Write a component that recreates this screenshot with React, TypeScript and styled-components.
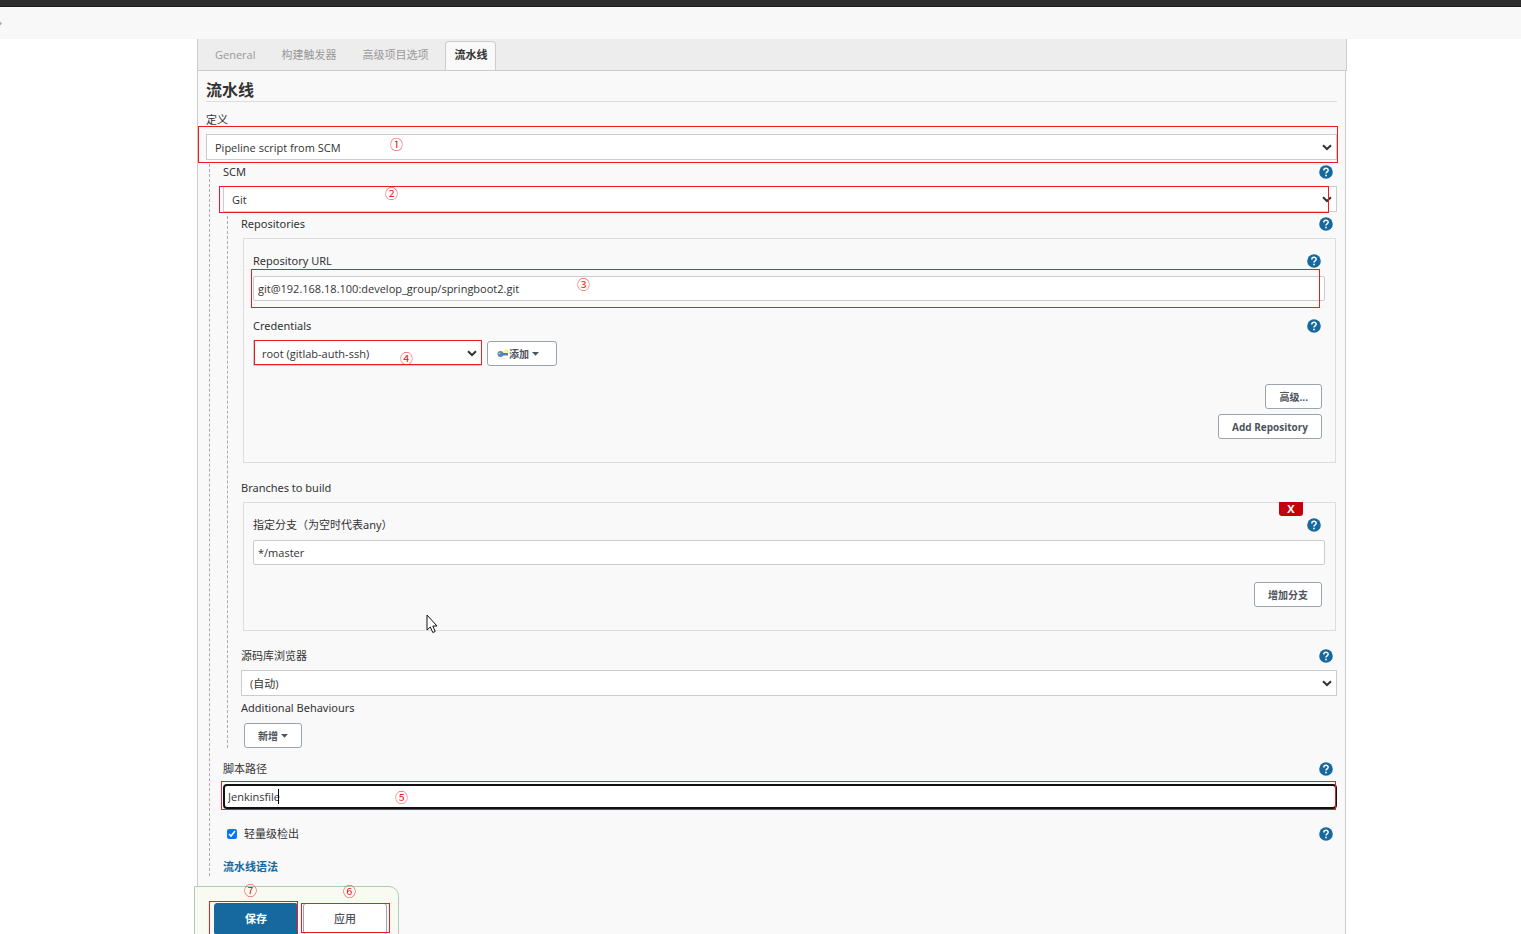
import React from 'react';
import styled, { createGlobalStyle, css } from 'styled-components';

const red = '#ed1c24';
const blue = '#15699e';

const GlobalStyle = createGlobalStyle`
  * { box-sizing: border-box; }
  body {
    margin: 0;
    background: #fff;
    color: #333;
    font: 11px/16px "Noto Sans", "Noto Sans CJK SC", sans-serif;
  }
  button, input, select {
    margin: 0;
    color: inherit;
    font: 11px/16px "Open Sans", "Noto Sans CJK SC", sans-serif;
  }
`;

const Page = styled.div`
  min-height: 100vh;
  display: flex;
  flex-direction: column;
`;

const TopBar = styled.header`
  height: 7px;
  background: #2d2d2d;
  border-bottom: 1px solid #1c1c1c;
`;

const Breadcrumbs = styled.nav`
  height: 32px;
  background: #f8f8f8;
  display: flex;
  align-items: center;
`;

const Main = styled.main`
  flex: 1;
  display: flex;
  flex-direction: column;
  margin: 0 174px 0 197px;
`;

const Tabs = styled.div`
  display: flex;
  align-items: flex-end;
  gap: 8px;
  height: 32px;
  padding-left: 8px;
  background: #ededed;
  border: 1px solid #ccc;
  border-top: 0;
`;

const Tab = styled.button<{ $active?: boolean }>`
  height: 29px;
  padding: 0 8px 2px;
  border: 1px solid transparent;
  border-bottom: 0;
  border-radius: 4px 4px 0 0;
  background: none;
  color: #999;
  ${(p) =>
    p.$active &&
    css`
      background: #f9f9f9;
      border-color: #ccc;
      color: #333;
      font-weight: 700;
    `}
`;

const Panel = styled.form`
  flex: 1;
  margin-right: 1px;
  padding: 7px 8px 54px;
  background: #f9f9f9;
  border: solid #ccc;
  border-width: 0 1px;
`;

const Title = styled.h1`
  margin: 0 0 6px;
  height: 24px;
  border-bottom: 1px solid #ddd;
  font-size: 16px;
  line-height: 24px;
`;

const LabelRow = styled.div<{ $raised?: boolean }>`
  display: flex;
  align-items: center;
  justify-content: space-between;
  height: 26px;
  padding: 0 4px ${(p) => (p.$raised ? 2 : 0)}px 0;
`;

const Group = styled.div<{ $nested?: boolean }>`
  display: flow-root;
  margin: 4px 0 0 ${(p) => (p.$nested ? 4 : 3)}px;
  padding-left: 13px;
  border-left: 1px dashed #aaa;

  > :first-child {
    margin-top: -4px;
  }
`;

const Box = styled.section`
  position: relative;
  margin: 0 1px 0 2px;
  padding: 9px 10px 23px 9px;
  border: 1px solid #ddd;
`;

const Field = styled.div<{ $width?: number }>`
  position: relative;
  height: 26px;
  width: ${(p) => (p.$width ? `${p.$width}px` : 'auto')};
`;

const Select = styled.select`
  appearance: none;
  display: block;
  width: 100%;
  height: 26px;
  padding: 2px 24px 0 8px;
  border: 1px solid #ccc;
  border-radius: 0;
  background: #fff;
`;

const Chevron = styled.svg`
  position: absolute;
  right: 5px;
  top: 10px;
  pointer-events: none;
`;

const Input = styled.input<{ $focused?: boolean }>`
  display: block;
  width: 100%;
  height: 25px;
  padding: 0 4px;
  border: 1px solid #ccc;
  border-radius: 2px;
  background: #fff;
  ${(p) =>
    p.$focused &&
    css`
      border: 2px solid #101010;
      border-radius: 4px;
      padding: 0 3px;
    `}
`;

const Caret = styled.span`
  position: absolute;
  left: 55px;
  top: 5px;
  width: 1px;
  height: 15px;
  background: #000;
`;

const Outline = styled.span<{ $inset: string }>`
  position: absolute;
  inset: ${(p) => p.$inset};
  border: 1px solid ${red};
  pointer-events: none;
`;

const Digit = styled.span<{ $x: number; $y: number }>`
  position: absolute;
  left: ${(p) => p.$x}px;
  top: ${(p) => p.$y}px;
  color: ${red};
  font: 13px/16px "Noto Sans CJK SC", sans-serif;
  pointer-events: none;
`;

const Button = styled.button`
  height: 25px;
  padding: 0 13px;
  border: 1px solid #98a5b0;
  border-radius: 3px;
  background: #fff;
  color: #4d545d;
  font-size: 10px;
  font-weight: 700;
  display: inline-flex;
  align-items: center;
  justify-content: center;
  white-space: nowrap;
`;

const AddButton = styled(Button)`
  width: 70px;
  padding: 0 17px 0 9px;
`;

const Row = styled.div`
  display: flex;
  align-items: flex-end;
  gap: 5px;
`;

const ButtonRow = styled(Row)`
  height: 26px;
  padding-left: 3px;
`;

const Actions = styled.div<{ $top: number }>`
  display: flex;
  flex-direction: column;
  align-items: flex-end;
  gap: 5px;
  margin-top: ${(p) => p.$top}px;
  padding-right: 3px;
`;

const HelpButton = styled.button`
  width: 14px;
  height: 14px;
  padding: 0;
  border: 0;
  background: none;
  display: flex;
`;

const DeleteButton = styled.button`
  position: absolute;
  top: -1px;
  right: 32px;
  width: 24px;
  height: 14px;
  padding: 0;
  border: 0;
  border-radius: 0 0 3px 3px;
  background: #c4000a;
  color: #fff;
  font-weight: 700;
  line-height: 14px;
`;

const Spacer = styled.div<{ $h: number }>`
  height: ${(p) => p.$h}px;
`;

const CheckLabel = styled.label`
  display: flex;
  align-items: center;
  gap: 7px;
  padding-left: 4px;
`;

const Checkbox = styled.input`
  width: 10px;
  height: 10px;
  accent-color: #0075ff;
`;

const SyntaxLink = styled.a`
  display: block;
  height: 22px;
  line-height: 26px;
  color: ${blue};
  font-weight: 700;
  text-decoration: none;
`;

const SaveBar = styled.div`
  position: fixed;
  left: 194px;
  bottom: -4px;
  display: flex;
  gap: 5px;
  height: 52px;
  padding: 16px 11px 0 19px;
  border: 1px solid #a9cdb5;
  border-radius: 0 10px 0 0;
  background: rgba(248, 250, 241, 0.9);
`;

const BarItem = styled.div`
  position: relative;
  height: 32px;
`;

const BarButton = styled.button<{ $primary?: boolean }>`
  display: block;
  width: 84px;
  height: 32px;
  border: 1px solid ${(p) => (p.$primary ? blue : '#98a5b0')};
  border-radius: 3px;
  background: ${(p) => (p.$primary ? blue : '#fff')};
  color: ${(p) => (p.$primary ? '#fff' : '#4d545d')};
  font-weight: ${(p) => (p.$primary ? 700 : 500)};
`;

const Pointer = styled.svg`
  position: fixed;
  left: 426px;
  top: 614px;
  pointer-events: none;
`;

function Help() {
  return (
    <HelpButton type="button" aria-label="帮助">
      <svg width="14" height="14" viewBox="0 0 14 14">
        <circle cx="7" cy="7" r="6.8" fill={blue} />
        <path d="M4.8 5.4C4.8 2.5 9.2 2.5 9.2 5.3C9.2 6.8 7 6.9 7 8.5" fill="none" stroke="#fff" strokeWidth="1.5" />
        <rect x="6.2" y="9.7" width="1.6" height="1.6" fill="#fff" />
      </svg>
    </HelpButton>
  );
}

function Label({ text, id, help, raised }: { text: string; id?: string; help?: boolean; raised?: boolean }) {
  return (
    <LabelRow $raised={raised}>
      {id ? <label htmlFor={id}>{text}</label> : <span>{text}</span>}
      {help && <Help />}
    </LabelRow>
  );
}

function Note({ inset, n, x, y }: { inset: string; n: string; x: number; y: number }) {
  return (
    <>
      <Outline $inset={inset} />
      <Digit $x={x} $y={y}>{n}</Digit>
    </>
  );
}

function Dropdown({ id, value, width, children }: { id: string; value: string; width?: number; children?: React.ReactNode }) {
  return (
    <Field $width={width}>
      <Select id={id} defaultValue={value}>
        <option>{value}</option>
      </Select>
      <Chevron width="10" height="7" viewBox="0 0 10 7">
        <path d="M1 1.2L5 5L9 1.2" fill="none" stroke="#333" strokeWidth="2" />
      </Chevron>
      {children}
    </Field>
  );
}

const DownArrow = styled.svg`
  margin-left: 3px;
`;

function Arrow() {
  return (
    <DownArrow width="7" height="4" viewBox="0 0 7 4">
      <path d="M0 0H7L3.5 3.7Z" fill="#4d545d" />
    </DownArrow>
  );
}

export default function App() {
  return (
    <Page>
      <GlobalStyle />
      <TopBar />
      <Breadcrumbs>
        <svg width="3" height="5" viewBox="0 0 3 5">
          <path d="M0 0.5L2 2.5L0 4.5Z" fill="#aaa" />
        </svg>
      </Breadcrumbs>
      <Main>
        <Tabs role="tablist">
          <Tab role="tab">General</Tab>
          <Tab role="tab">构建触发器</Tab>
          <Tab role="tab">高级项目选项</Tab>
          <Tab role="tab" aria-selected $active>流水线</Tab>
        </Tabs>
        <Panel onSubmit={(e) => e.preventDefault()}>
          <Title>流水线</Title>
          <Label text="定义" id="definition" raised />
          <Dropdown id="definition" value="Pipeline script from SCM">
            <Note inset="-8px -1px -3px -8px" n="①" x={184} y={2} />
          </Dropdown>
          <Group>
            <Label text="SCM" id="scm" help raised />
            <Dropdown id="scm" value="Git">
              <Note inset="0 8px -1px -4px" n="②" x={162} y={-1} />
            </Dropdown>
            <Group $nested>
              <Label text="Repositories" help raised />
              <Box>
                <Label text="Repository URL" id="url" help />
                <Spacer $h={2} />
                <Field>
                  <Input id="url" defaultValue="git@192.168.18.100:develop_group/springboot2.git" />
                  <Note inset="-7px 5px -6px -2px" n="③" x={324} y={0} />
                </Field>
                <Spacer $h={11} />
                <Label text="Credentials" id="credentials" help />
                <Spacer $h={1} />
                <Row>
                  <Dropdown id="credentials" value="root (gitlab-auth-ssh)" width={229}>
                    <Note inset="0 0 1px 1px" n="④" x={147} y={10} />
                  </Dropdown>
                  <AddButton type="button">
                    <svg width="12" height="12" viewBox="0 0 12 12">
                      <circle cx="9" cy="3.5" r="2.6" fill="#fff38c" />
                      <ellipse cx="5" cy="10.5" rx="4" ry="1" fill="#eee" />
                      <circle cx="3.5" cy="6" r="3" fill="#5a86b4" />
                      <path d="M5 5H11V7.5H5Z" fill="#5580ab" />
                      <circle cx="2.5" cy="5.5" r="1" fill="#a9c6e2" />
                    </svg>
                    添加
                    <Arrow />
                  </AddButton>
                </Row>
                <Actions $top={18}>
                  <Button type="button">高级...</Button>
                  <Button type="button">Add Repository</Button>
                </Actions>
              </Box>
              <Spacer $h={12} />
              <Label text="Branches to build" />
              <Spacer $h={1} />
              <Box>
                <DeleteButton type="button">X</DeleteButton>
                <Label text="指定分支（为空时代表any）" id="branch" help />
                <Spacer $h={2} />
                <Field>
                  <Input id="branch" defaultValue="*/master" />
                </Field>
                <Actions $top={16}>
                  <Button type="button">增加分支</Button>
                </Actions>
              </Box>
              <Spacer $h={12} />
              <Label text="源码库浏览器" id="browser" help />
              <Spacer $h={1} />
              <Dropdown id="browser" value="(自动)" />
              <Label text="Additional Behaviours" raised />
              <ButtonRow>
                <Button type="button">
                  新增
                  <Arrow />
                </Button>
              </ButtonRow>
            </Group>
            <Spacer $h={8} />
            <Label text="脚本路径" id="script" help />
            <Spacer $h={2} />
            <Field>
              <Input id="script" $focused defaultValue="Jenkinsfile" />
              <Caret />
              <Note inset="-3px 1px 0 -2px" n="⑤" x={172} y={5} />
            </Field>
            <Spacer $h={11} />
            <LabelRow>
              <CheckLabel>
                <Checkbox type="checkbox" defaultChecked />
                轻量级检出
              </CheckLabel>
              <Help />
            </LabelRow>
            <Spacer $h={7} />
            <SyntaxLink href="#syntax">流水线语法</SyntaxLink>
          </Group>
        </Panel>
      </Main>
      <SaveBar>
        <BarItem>
          <BarButton type="submit" $primary>保存</BarButton>
          <Note inset="-2px 0 -2px -5px" n="⑦" x={30} y={-21} />
        </BarItem>
        <BarItem>
          <BarButton type="button">应用</BarButton>
          <Note inset="0 -3px 2px -2px" n="⑥" x={40} y={-20} />
        </BarItem>
      </SaveBar>
      <Pointer width="12" height="20" viewBox="0 0 12 20">
        <path d="M1 1V16L4.3 13L6.8 18.5L9.2 17.5L6.8 12H11Z" fill="#fff" stroke="#111" strokeWidth="1" />
      </Pointer>
    </Page>
  );
}
